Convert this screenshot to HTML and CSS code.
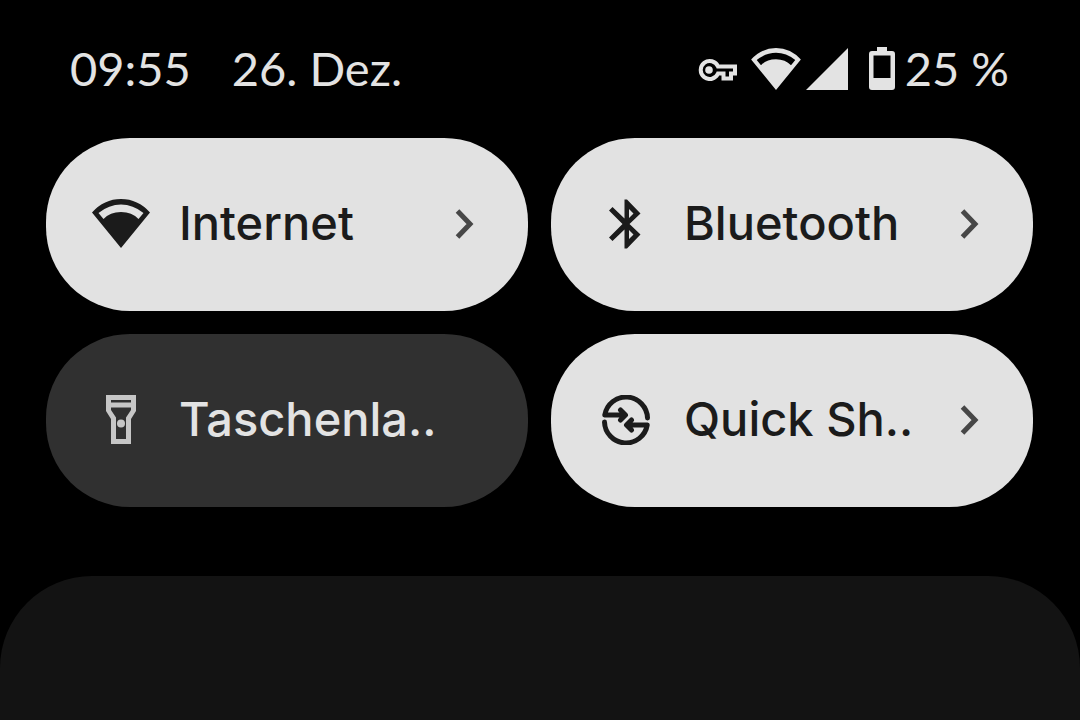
FILE: index.html
```html
<!DOCTYPE html>
<html lang="de">
<head>
    <meta charset="UTF-8">
    <meta name="viewport" content="width=device-width, initial-scale=1.0">
    <title>Schnelleinstellungen</title>
    <link rel="stylesheet" href="styles.css">
</head>
<body>
    <!-- Status bar -->
    <header class="status-bar">
        <span class="time">09:55</span>
        <span class="date">26. Dez.</span>
        <div class="status-icons">
            <svg class="icon-key" width="40" height="24" viewBox="0 0 40 24" fill="none" stroke="currentColor" stroke-width="4" aria-hidden="true">
                <path d="M20 9.500H37V16.500H33V21.500H25.500V16.500H20A9 9 0 1 1 20 9.500Z"/>
                <circle cx="11" cy="13" r="3.800" fill="currentColor" stroke="none"/>
            </svg>
            <svg class="icon-wifi" width="50" height="42" viewBox="0 0 58 49" aria-hidden="true">
                <path fill="currentColor" fill-rule="evenodd" d="M0 13.500Q12 0 29 0T58 13.500L29 49ZM6.500 14L11.500 20Q18 13 29 13T46.500 20L51.500 14Q41 5.500 29 5.500T6.500 14Z"/>
            </svg>
            <svg class="icon-signal" width="42" height="42" viewBox="0 0 42 42" aria-hidden="true">
                <path fill="currentColor" d="M42 0V42H0Z"/>
            </svg>
            <svg class="icon-battery" width="26" height="44" viewBox="0 0 26 44" aria-hidden="true">
                <path fill="currentColor" fill-rule="evenodd" d="M8 0H18V4H23Q26 4 26 7V40Q26 43 23 43H3Q0 43 0 40V7Q0 4 3 4H8ZM4.500 8.500V31H21.500V8.500Z"/>
            </svg>
            <span class="battery-level">25 %</span>
        </div>
    </header>

    <!-- Quick settings -->
    <main class="tiles">
        <button class="tile active" type="button">
            <svg class="tile-icon" width="60" height="50" viewBox="0 0 60 50" aria-hidden="true">
                <path transform="translate(1 0)" fill="currentColor" fill-rule="evenodd" d="M0 13.500Q12 0 29 0T58 13.500L29 49ZM6.500 14L11.500 20Q18 13 29 13T46.500 20L51.500 14Q41 5.500 29 5.500T6.500 14Z"/>
            </svg>
            <span class="tile-label">Internet</span>
            <svg class="chevron" width="20" height="32" viewBox="0 0 20 32" fill="none" stroke="currentColor" stroke-width="5" aria-hidden="true">
                <path d="M2.500 3L15 16L2.500 29"/>
            </svg>
        </button>
        <button class="tile active" type="button">
            <svg class="tile-icon" width="60" height="50" viewBox="0 0 60 50" aria-hidden="true">
                <path fill="currentColor" fill-rule="evenodd" d="M28.500 .500H31L44.500 14.500L33.500 25L44.500 35.500L31 49.500H28.500V30.500L16.500 42L13 38.500L26.500 25L13 11.500L16.500 8L28.500 19.500ZM33 10V19L37.500 14.500ZM33 31V40L37.500 35.500Z"/>
            </svg>
            <span class="tile-label">Bluetooth</span>
            <svg class="chevron" width="20" height="32" viewBox="0 0 20 32" fill="none" stroke="currentColor" stroke-width="5" aria-hidden="true">
                <path d="M2.500 3L15 16L2.500 29"/>
            </svg>
        </button>
        <button class="tile" type="button">
            <svg class="tile-icon" width="60" height="50" viewBox="0 0 60 50" aria-hidden="true">
                <path fill="currentColor" fill-rule="evenodd" d="M15 0H45V16L40 24V49H20V24L15 16ZM20 5V7.500H40V5ZM20 12.500V15L25 22.500V44H35V22.500L40 15V12.500Z"/>
                <circle cx="30" cy="28.500" r="4" fill="currentColor"/>
            </svg>
            <span class="tile-label">Taschenla..</span>
        </button>
        <button class="tile active" type="button">
            <svg class="tile-icon" width="60" height="50" viewBox="0 0 60 50" fill="none" stroke="currentColor" stroke-width="5" stroke-linecap="round" stroke-linejoin="round" aria-hidden="true">
                <path d="M51.500 23A21.500 21.500 0 0 0 8.800 20H29M24.500 15L29.500 20L24.500 25"/>
                <path d="M8.500 27A21.500 21.500 0 0 0 51.200 30H31M35.500 25L30.500 30L35.500 35"/>
            </svg>
            <span class="tile-label">Quick Sh..</span>
            <svg class="chevron" width="20" height="32" viewBox="0 0 20 32" fill="none" stroke="currentColor" stroke-width="5" aria-hidden="true">
                <path d="M2.500 3L15 16L2.500 29"/>
            </svg>
        </button>
    </main>

    <!-- Notification shade -->
    <section class="shade"></section>
</body>
</html>
```

FILE: styles.css
```css
* {
    box-sizing: border-box;
}
body {
    margin: 0;
    min-height: 100vh;
    display: flex;
    flex-direction: column;
    background: #000;
    color: #e3e3e3;
    font-family: Lato, Roboto, "Liberation Sans", sans-serif;
    font-size: 47px;
    line-height: 54px;
}
.status-bar {
    display: flex;
    align-items: center;
    gap: 41px;
    padding: 41px 71px 41px 70px;
}
.status-bar span {
    padding-bottom: 2px;
}
.status-icons {
    display: flex;
    align-items: center;
    margin-left: auto;
}
.icon-wifi {
    margin-left: 13px;
}
.icon-signal {
    margin-left: 5px;
}
.icon-battery {
    margin-left: 21px;
}
.status-bar .battery-level {
    margin-left: 10px;
}
.tiles {
    display: grid;
    grid-template-columns: 1fr 1fr;
    gap: 23px;
    padding: 0 47px 0 46px;
}
.tile {
    display: flex;
    align-items: center;
    height: 173px;
    padding: 0 53px 2px 45px;
    border: none;
    border-radius: 84px;
    background: #303030;
    color: #e3e3e3;
    font-family: Inter, Roboto, "Liberation Sans", sans-serif;
    font-size: 47px;
    font-weight: 500;
    text-align: left;
    cursor: pointer;
}
.tile.active {
    background: #e2e2e2;
    color: #1b1b1b;
}
.tile-icon {
    flex: none;
}
.tile:not(.active) .tile-icon {
    color: #c6c6c6;
}
.tile-label {
    flex: 1;
    margin-left: 28px;
    padding-bottom: 2px;
    white-space: nowrap;
}
.chevron {
    flex: none;
    color: #474747;
}
.shade {
    flex: 1;
    margin-top: 69px;
    border-radius: 92px 92px 0 0;
    background: #131313;
}
```
